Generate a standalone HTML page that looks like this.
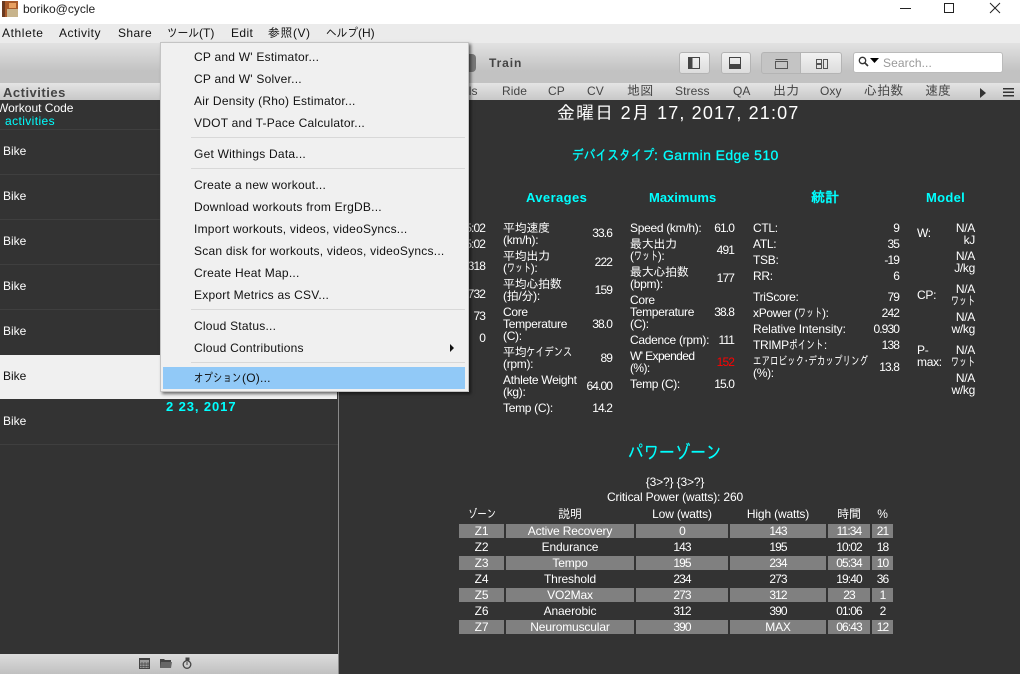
<!DOCTYPE html>
<html><head><meta charset="utf-8">
<style>
html,body{margin:0;padding:0;width:1020px;height:674px;overflow:hidden;background:#333}
body{position:relative;font-family:"Liberation Sans","IPAGothic","Noto Sans CJK JP",sans-serif;font-size:12px;color:#fff}
.a{position:absolute}
.t{position:absolute;white-space:nowrap;line-height:14px;height:14px}
.k{color:#111}
.c{color:#0ff;font-weight:bold}
.g{position:absolute;background:#808080;height:14px}
.ct{position:absolute;white-space:nowrap;line-height:14px;text-align:center;letter-spacing:-.15px}
.l{position:absolute;white-space:nowrap;line-height:12px;letter-spacing:-.3px}
.rp .t{letter-spacing:-.3px}
.rp .t.v,.ct.v{letter-spacing:-.9px}
.sep{position:absolute;height:1px;background:#3f3f3f;left:0;width:338px}
.ms{position:absolute;left:191px;width:274px;height:1px;background:#d8d8d8}
.btn{position:absolute;top:52px;height:22px;border:1px solid #b4b4b4;border-radius:3px;background:linear-gradient(#f2f2f2,#dcdcdc);box-sizing:border-box}
.n{display:inline-block;white-space:nowrap;transform-origin:0 50%;letter-spacing:0}
.m .t{letter-spacing:.23px}
.tb{color:#444;letter-spacing:.1px}
.w3{width:24px;transform:scaleX(.67)}
</style></head><body>
<div class="a" style="left:0;top:0;width:1020px;height:24px;background:#fff"></div>
<svg class="a" style="left:2px;top:1px" width="16" height="16"><rect width="16" height="16" fill="#a85a2a"/><rect x="5" y="8" width="11" height="8" fill="#c8b48c"/><rect x="7" y="2" width="7" height="5" fill="#e8a060"/><rect width="3" height="16" fill="#6a3a20"/></svg>
<div class="t k" style="left:23px;top:2px;font-size:12px;color:#222">boriko@cycle</div>
<svg class="a" style="left:890px;top:0" width="130" height="20" fill="none" stroke="#222"><path d="M10 8.500H21"/><rect x="54.500" y="3.500" width="9" height="9"/><path d="M100 3l10 10M110 3l-10 10"/></svg>

<div class="a" style="left:0;top:24px;width:1020px;height:19px;background:#ebebeb"></div>
<div class="t k" style="left:2px;top:26px;letter-spacing:.6px">Athlete</div>
<div class="t k" style="left:59px;top:26px;letter-spacing:.5px">Activity</div>
<div class="t k" style="left:118px;top:26px;letter-spacing:.4px">Share</div>
<div class="t k" style="left:167px;top:26px"><span class="n" style="width:32px;transform:scaleX(.89)">ツール</span>(T)</div>
<div class="t k" style="left:231px;top:26px;letter-spacing:.4px">Edit</div>
<div class="t k" style="left:268px;top:26px;letter-spacing:.5px">参照(V)</div>
<div class="t k" style="left:326px;top:26px"><span class="n" style="width:32px;transform:scaleX(.89)">ヘルプ</span>(H)</div>

<div class="a" style="left:0;top:43px;width:1020px;height:40px;background:linear-gradient(#e2e2e2,#c2c2c2 70%)"></div>
<div class="a" style="left:0;top:83px;width:1020px;height:17px;background:linear-gradient(#e4e4e4,#c8c8c8)"></div>
<div class="a" style="left:440px;top:54px;width:36px;height:18px;background:#777;border-radius:4px"></div>
<div class="t" style="left:489px;top:56px;color:#444;font-weight:bold;font-size:12px;letter-spacing:.9px">Train</div>

<div class="btn" style="left:679px;width:31px"></div>
<svg class="a" style="left:688px;top:57px" width="14" height="13"><rect x=".5" y=".5" width="11" height="11" fill="none" stroke="#444"/><rect width="4.500" height="12" fill="#444"/></svg>
<div class="btn" style="left:721px;width:30px"></div>
<svg class="a" style="left:729px;top:57px" width="14" height="13"><rect x=".5" y=".5" width="11" height="11" fill="none" stroke="#444"/><rect y="7" width="12" height="5" fill="#444"/></svg>
<div class="btn" style="left:761px;width:40px;border-radius:3px 0 0 3px;background:#c4c4c4"></div>
<div class="btn" style="left:800px;width:42px;border-radius:0 3px 3px 0"></div>
<svg class="a" style="left:775px;top:59px" width="14" height="11" fill="none" stroke="#555"><path d="M.5 .5H12.500M.5 2.500H12.500V9.500H.5Z"/></svg>
<svg class="a" style="left:816px;top:59px" width="14" height="11" fill="none" stroke="#555"><rect x=".5" y=".5" width="5" height="4"/><rect x=".5" y="5.500" width="5" height="4"/><rect x="7.500" y=".5" width="4" height="9"/></svg>
<div class="a" style="left:853px;top:52px;width:150px;height:21px;background:#fff;border:1px solid #bbb;border-radius:3px;box-sizing:border-box"></div>
<svg class="a" style="left:858px;top:56px" width="24" height="12"><circle cx="4.500" cy="4.500" r="3.200" fill="none" stroke="#333" stroke-width="1.300"/><path d="M7 7l3 3" stroke="#333" stroke-width="1.600"/><path d="M12 2h9l-4.500 5z" fill="#000"/></svg>
<div class="t" style="left:883px;top:56px;color:#999;letter-spacing:.1px">Search...</div>

<div class="t" style="left:3px;top:86px;color:#444;font-weight:bold;font-size:13px;letter-spacing:.5px">Activities</div>
<div class="t tb" style="left:466px;top:84px;width:14px;overflow:hidden">ils</div>
<div class="t tb" style="left:502px;top:84px">Ride</div>
<div class="t tb" style="left:548px;top:84px">CP</div>
<div class="t tb" style="left:587px;top:84px">CV</div>
<div class="t tb" style="left:627px;top:84px;font-size:13px">地図</div>
<div class="t tb" style="left:675px;top:84px">Stress</div>
<div class="t tb" style="left:733px;top:84px">QA</div>
<div class="t tb" style="left:773px;top:84px;font-size:13px">出力</div>
<div class="t tb" style="left:820px;top:84px">Oxy</div>
<div class="t tb" style="left:864px;top:84px;font-size:13px">心拍数</div>
<div class="t tb" style="left:925px;top:84px;font-size:13px">速度</div>
<svg class="a" style="left:978px;top:86px" width="38" height="12"><path d="M2 2l6 5-6 5z" fill="#333"/><path d="M25 2h11v1.500H25zM25 5.500h11V7H25zM25 9h11v1.500H25z" fill="#333"/></svg>

<div class="a" style="left:0;top:100px;width:338px;height:554px;background:#333"></div>
<div class="a" style="left:338px;top:100px;width:1px;height:574px;background:#8a8a8a"></div>
<div class="t" style="left:-3px;top:101px">Workout Code</div>
<div class="t" style="left:5px;top:114px;color:#0ff;letter-spacing:.4px">activities</div>
<div class="sep" style="top:129px"></div>
<div class="sep" style="top:174px"></div>
<div class="sep" style="top:219px"></div>
<div class="sep" style="top:264px"></div>
<div class="sep" style="top:309px"></div>
<div class="sep" style="top:444px"></div>
<div class="a" style="left:0;top:355px;width:337px;height:44px;background:#f0f0f0"></div>
<div class="t" style="left:3px;top:144px">Bike</div>
<div class="t" style="left:3px;top:189px">Bike</div>
<div class="t" style="left:3px;top:234px">Bike</div>
<div class="t" style="left:3px;top:279px">Bike</div>
<div class="t" style="left:3px;top:324px">Bike</div>
<div class="t k" style="left:3px;top:369px">Bike</div>
<div class="t" style="left:3px;top:414px">Bike</div>
<div class="t c" style="left:166px;top:400px;font-size:13px;letter-spacing:.9px">2 23, 2017</div>

<div class="a" style="left:0;top:654px;width:338px;height:20px;background:linear-gradient(#dcdcdc,#c0c0c0)"></div>
<svg class="a" style="left:138px;top:657px" width="60" height="14"><rect x="1.500" y="1.500" width="10" height="10" fill="#999" stroke="#444"/><path d="M1 1h11v2H1z" fill="#444"/><path d="M4 5v6M7 5v6M10 5v6M2 7h10M2 9.500h10" stroke="#444" stroke-width=".7"/><path d="M22 2h4l1 1h6v8H22z" fill="#444"/><path d="M23 5h11l-1 6H22z" fill="#666"/><circle cx="49" cy="7.500" r="3.800" fill="none" stroke="#444" stroke-width="1.300"/><path d="M48 1h3v2h-3zM49 5v3" stroke="#444" fill="#444"/></svg>

<!-- report -->
<div class="t" style="left:557px;top:103px;font-size:18px;line-height:20px;height:20px;letter-spacing:1.15px">金曜日 2月 17, 2017, 21:07</div>
<div class="t" style="left:572px;top:148px;font-size:14px;color:#0ff;-webkit-text-stroke:.3px #0ff"><span class="n" style="width:82px;transform:scaleX(.84)">デバイスタイプ</span>:</div>
<div class="t" style="left:663px;top:148px;font-size:14px;color:#0ff;letter-spacing:.4px;-webkit-text-stroke:.3px #0ff">Garmin Edge 510</div>
<div class="t c" style="left:526px;top:191px;font-size:13px;letter-spacing:.4px">Averages</div>
<div class="t c" style="left:649px;top:191px;font-size:13px">Maximums</div>
<div class="t c" style="left:811px;top:190px;font-size:14px">統計</div>
<div class="t c" style="left:926px;top:191px;font-size:13px;letter-spacing:.3px">Model</div>

<div class="rp">
<div class="t v" style="right:535px;top:221px">5:02</div>
<div class="t v" style="right:535px;top:237px">5:02</div>
<div class="t v" style="right:535px;top:259px">318</div>
<div class="t v" style="right:535px;top:287px">732</div>
<div class="t v" style="right:535px;top:309px">73</div>
<div class="t v" style="right:535px;top:331px">0</div>

<div class="l" style="left:503px;top:222px">平均速度<br>(km/h):</div><div class="t v" style="right:408px;top:226px">33.6</div>
<div class="l" style="left:503px;top:250px">平均出力<br>(<span class="n w3">ワット</span>):</div><div class="t v" style="right:408px;top:255px">222</div>
<div class="l" style="left:503px;top:278px">平均心拍数<br>(拍/分):</div><div class="t v" style="right:408px;top:283px">159</div>
<div class="l" style="left:503px;top:306px">Core<br>Temperature<br>(C):</div><div class="t v" style="right:408px;top:317px">38.0</div>
<div class="l" style="left:503px;top:346px">平均<span class="n" style="width:46px;transform:scaleX(.77)">ケイデンス</span><br>(rpm):</div><div class="t v" style="right:408px;top:351px">89</div>
<div class="l" style="left:503px;top:374px">Athlete Weight<br>(kg):</div><div class="t v" style="right:408px;top:379px">64.00</div>
<div class="t" style="left:503px;top:401px">Temp (C):</div><div class="t v" style="right:408px;top:401px">14.2</div>

<div class="t" style="left:630px;top:221px">Speed (km/h):</div><div class="t v" style="right:286px;top:221px">61.0</div>
<div class="l" style="left:630px;top:238px">最大出力<br>(<span class="n w3">ワット</span>):</div><div class="t v" style="right:286px;top:243px">491</div>
<div class="l" style="left:630px;top:266px">最大心拍数<br>(bpm):</div><div class="t v" style="right:286px;top:271px">177</div>
<div class="l" style="left:630px;top:294px">Core<br>Temperature<br>(C):</div><div class="t v" style="right:286px;top:305px">38.8</div>
<div class="t" style="left:630px;top:333px">Cadence (rpm):</div><div class="t v" style="right:286px;top:333px">111</div>
<div class="l" style="left:630px;top:350px;letter-spacing:-.6px">W' Expended<br>(%):</div><div class="t v" style="right:286px;top:355px;color:#f00">152</div>
<div class="t" style="left:630px;top:377px">Temp (C):</div><div class="t v" style="right:286px;top:377px">15.0</div>

<div class="t" style="left:753px;top:221px">CTL:</div><div class="t v" style="right:121px;top:221px">9</div>
<div class="t" style="left:753px;top:237px">ATL:</div><div class="t v" style="right:121px;top:237px">35</div>
<div class="t" style="left:753px;top:253px">TSB:</div><div class="t v" style="right:121px;top:253px">-19</div>
<div class="t" style="left:753px;top:269px">RR:</div><div class="t v" style="right:121px;top:269px">6</div>
<div class="t" style="left:753px;top:290px">TriScore:</div><div class="t v" style="right:121px;top:290px">79</div>
<div class="t" style="left:753px;top:306px">xPower (<span class="n w3">ワット</span>):</div><div class="t v" style="right:121px;top:306px">242</div>
<div class="t" style="left:753px;top:322px;letter-spacing:-.1px">Relative Intensity:</div><div class="t v" style="right:121px;top:322px">0.930</div>
<div class="t" style="left:753px;top:338px">TRIMP<span class="n" style="width:35px;transform:scaleX(.72)">ポイント</span>:</div><div class="t v" style="right:121px;top:338px">138</div>
<div class="l" style="left:753px;top:355px"><span class="n" style="width:115px;transform:scaleX(.71)">エアロビック･デカップリング</span><br>(%):</div><div class="t v" style="right:121px;top:360px">13.8</div>

<div class="t" style="left:917px;top:226px">W:</div>
<div class="t" style="right:45px;top:221px">N/A</div><div class="t" style="right:45px;top:233px">kJ</div>
<div class="t" style="right:45px;top:249px">N/A</div><div class="t" style="right:45px;top:261px">J/kg</div>
<div class="t" style="left:917px;top:288px">CP:</div>
<div class="t" style="right:45px;top:282px">N/A</div><div class="t" style="right:45px;top:294px"><span class="n w3">ワット</span></div>
<div class="t" style="right:45px;top:310px">N/A</div><div class="t" style="right:45px;top:322px">w/kg</div>
<div class="t" style="left:917px;top:343px">P-</div><div class="t" style="left:917px;top:355px">max:</div>
<div class="t" style="right:45px;top:343px">N/A</div><div class="t" style="right:45px;top:355px"><span class="n w3">ワット</span></div>
<div class="t" style="right:45px;top:371px">N/A</div><div class="t" style="right:45px;top:383px">w/kg</div>
</div>

<div class="t" style="left:628px;top:444px;font-size:19px;line-height:20px;height:20px;color:#0ff;-webkit-text-stroke:.2px #0ff"><span class="n" style="width:94px;transform:scaleX(.82)">パワーゾーン</span></div>
<div class="ct" style="left:450px;width:450px;top:475px">{3&gt;?} {3&gt;?}</div>
<div class="ct" style="left:450px;width:450px;top:490px">Critical Power (watts): 260</div>

<div class="ct" style="left:459px;width:45px;top:507px"><span class="n" style="width:28px;transform:scaleX(.78)">ゾーン</span></div>
<div class="ct" style="left:506px;width:128px;top:507px">説明</div>
<div class="ct" style="left:636px;width:92px;top:507px">Low (watts)</div>
<div class="ct" style="left:730px;width:96px;top:507px">High (watts)</div>
<div class="ct" style="left:828px;width:42px;top:507px">時間</div>
<div class="ct" style="left:872px;width:21px;top:507px">%</div>

<div class="g" style="left:459px;top:524px;width:45px"></div><div class="g" style="left:506px;top:524px;width:128px"></div><div class="g" style="left:636px;top:524px;width:92px"></div><div class="g" style="left:730px;top:524px;width:96px"></div><div class="g" style="left:828px;top:524px;width:42px"></div><div class="g" style="left:872px;top:524px;width:21px"></div>
<div class="g" style="left:459px;top:556px;width:45px"></div><div class="g" style="left:506px;top:556px;width:128px"></div><div class="g" style="left:636px;top:556px;width:92px"></div><div class="g" style="left:730px;top:556px;width:96px"></div><div class="g" style="left:828px;top:556px;width:42px"></div><div class="g" style="left:872px;top:556px;width:21px"></div>
<div class="g" style="left:459px;top:588px;width:45px"></div><div class="g" style="left:506px;top:588px;width:128px"></div><div class="g" style="left:636px;top:588px;width:92px"></div><div class="g" style="left:730px;top:588px;width:96px"></div><div class="g" style="left:828px;top:588px;width:42px"></div><div class="g" style="left:872px;top:588px;width:21px"></div>
<div class="g" style="left:459px;top:620px;width:45px"></div><div class="g" style="left:506px;top:620px;width:128px"></div><div class="g" style="left:636px;top:620px;width:92px"></div><div class="g" style="left:730px;top:620px;width:96px"></div><div class="g" style="left:828px;top:620px;width:42px"></div><div class="g" style="left:872px;top:620px;width:21px"></div>

<div class="ct" style="left:459px;width:45px;top:524px">Z1</div><div class="ct" style="left:506px;width:128px;top:524px">Active Recovery</div><div class="ct v" style="left:636px;width:92px;top:524px">0</div><div class="ct v" style="left:730px;width:96px;top:524px">143</div><div class="ct v" style="left:828px;width:42px;top:524px">11:34</div><div class="ct v" style="left:872px;width:21px;top:524px">21</div>
<div class="ct" style="left:459px;width:45px;top:540px">Z2</div><div class="ct" style="left:506px;width:128px;top:540px">Endurance</div><div class="ct v" style="left:636px;width:92px;top:540px">143</div><div class="ct v" style="left:730px;width:96px;top:540px">195</div><div class="ct v" style="left:828px;width:42px;top:540px">10:02</div><div class="ct v" style="left:872px;width:21px;top:540px">18</div>
<div class="ct" style="left:459px;width:45px;top:556px">Z3</div><div class="ct" style="left:506px;width:128px;top:556px">Tempo</div><div class="ct v" style="left:636px;width:92px;top:556px">195</div><div class="ct v" style="left:730px;width:96px;top:556px">234</div><div class="ct v" style="left:828px;width:42px;top:556px">05:34</div><div class="ct v" style="left:872px;width:21px;top:556px">10</div>
<div class="ct" style="left:459px;width:45px;top:572px">Z4</div><div class="ct" style="left:506px;width:128px;top:572px">Threshold</div><div class="ct v" style="left:636px;width:92px;top:572px">234</div><div class="ct v" style="left:730px;width:96px;top:572px">273</div><div class="ct v" style="left:828px;width:42px;top:572px">19:40</div><div class="ct v" style="left:872px;width:21px;top:572px">36</div>
<div class="ct" style="left:459px;width:45px;top:588px">Z5</div><div class="ct" style="left:506px;width:128px;top:588px">VO2Max</div><div class="ct v" style="left:636px;width:92px;top:588px">273</div><div class="ct v" style="left:730px;width:96px;top:588px">312</div><div class="ct v" style="left:828px;width:42px;top:588px">23</div><div class="ct v" style="left:872px;width:21px;top:588px">1</div>
<div class="ct" style="left:459px;width:45px;top:604px">Z6</div><div class="ct" style="left:506px;width:128px;top:604px">Anaerobic</div><div class="ct v" style="left:636px;width:92px;top:604px">312</div><div class="ct v" style="left:730px;width:96px;top:604px">390</div><div class="ct v" style="left:828px;width:42px;top:604px">01:06</div><div class="ct v" style="left:872px;width:21px;top:604px">2</div>
<div class="ct" style="left:459px;width:45px;top:620px">Z7</div><div class="ct" style="left:506px;width:128px;top:620px">Neuromuscular</div><div class="ct v" style="left:636px;width:92px;top:620px">390</div><div class="ct" style="left:730px;width:96px;top:620px">MAX</div><div class="ct v" style="left:828px;width:42px;top:620px">06:43</div><div class="ct v" style="left:872px;width:21px;top:620px">12</div>

<!-- menu -->
<div class="a" style="left:160px;top:42px;width:309px;height:350px;background:#f0f0f0;border:1px solid #c4c4c4;box-sizing:border-box;box-shadow:2px 2px 3px rgba(0,0,0,.55)"></div>
<div class="a" style="left:163px;top:367px;width:302px;height:22px;background:#91c9f7"></div>
<div class="ms" style="top:137px"></div><div class="ms" style="top:168px"></div><div class="ms" style="top:309px"></div><div class="ms" style="top:362px"></div>
<div class="m">
<div class="t k" style="left:194px;top:50px">CP and W' Estimator...</div>
<div class="t k" style="left:194px;top:72px">CP and W' Solver...</div>
<div class="t k" style="left:194px;top:94px">Air Density (Rho) Estimator...</div>
<div class="t k" style="left:194px;top:116px">VDOT and T-Pace Calculator...</div>
<div class="t k" style="left:194px;top:147px">Get Withings Data...</div>
<div class="t k" style="left:194px;top:178px">Create a new workout...</div>
<div class="t k" style="left:194px;top:200px">Download workouts from ErgDB...</div>
<div class="t k" style="left:194px;top:222px">Import workouts, videos, videoSyncs...</div>
<div class="t k" style="left:194px;top:244px">Scan disk for workouts, videos, videoSyncs...</div>
<div class="t k" style="left:194px;top:266px">Create Heat Map...</div>
<div class="t k" style="left:194px;top:288px">Export Metrics as CSV...</div>
<div class="t k" style="left:194px;top:319px">Cloud Status...</div>
<div class="t k" style="left:194px;top:341px">Cloud Contributions</div>
<div class="t k" style="left:194px;top:371px"><span class="n" style="width:48px;transform:scaleX(.79)">オプション</span>(O)...</div>
</div>
<svg class="a" style="left:449px;top:343px" width="6" height="10"><path d="M1 1l4 4-4 4z" fill="#111"/></svg>
</body></html>
